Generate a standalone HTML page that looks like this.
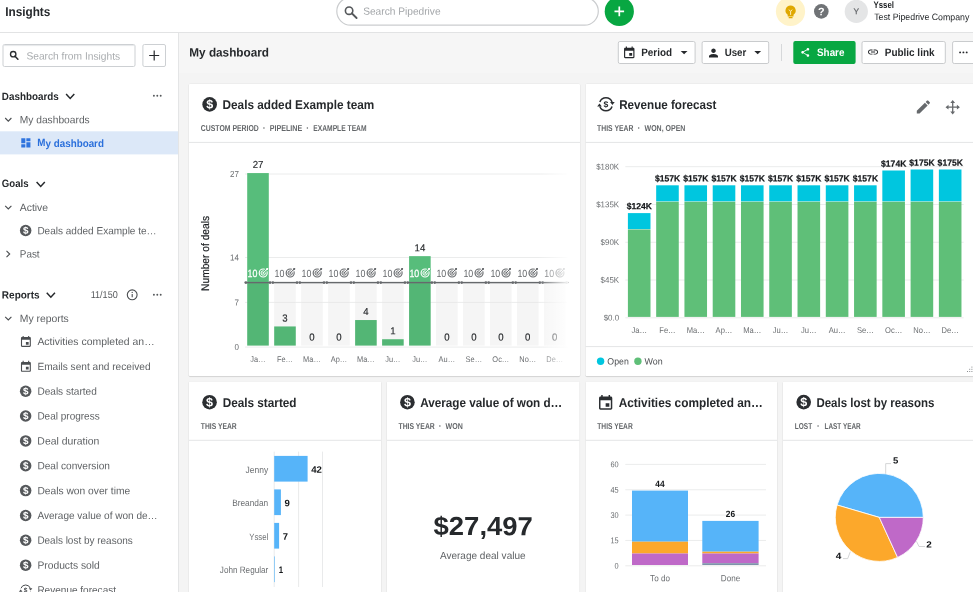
<!DOCTYPE html><html lang="en"><head><meta charset="utf-8"><title>Insights - My dashboard</title><style>html,body{margin:0;padding:0}body{width:973px;height:592px;overflow:hidden;position:relative;background:#f4f4f4;font-family:"Liberation Sans", sans-serif;color:#26292c}svg text{font-family:"Liberation Sans", sans-serif;white-space:pre}#app{position:absolute;left:0;top:0;width:973px;height:592px;overflow:hidden;background:#f4f4f4}svg{will-change:transform}</style></head><body><div id="app"><header class="topbar" style="position:absolute;left:0;top:0;width:973px;height:32px;background:#fff;border-bottom:1px solid #e2e3e4"><svg width="973" height="32" viewBox="0 0 973 32" style="position:absolute;left:0;top:0;overflow:hidden;"><text x="5.16" y="16.00" font-size="12.75" font-weight="700" fill="#26292c" textLength="45.18" lengthAdjust="spacingAndGlyphs" transform="rotate(0.03 5.8 16.0)" >Insights</text><rect x="336.8" y="-2.5" width="261.5" height="27.6" rx="13.8" fill="#fff" stroke="#cbcdcf" stroke-width="1.2"/><circle cx="349.10" cy="10.70" r="3.7" fill="none" stroke="#55585b" stroke-width="1.6"/><path d="M351.75 13.28 L356.60 18.00" stroke="#55585b" stroke-width="1.84" stroke-linecap="round"/><text x="363.18" y="14.80" font-size="10.43" font-weight="400" fill="#a3a6a9" textLength="77.44" lengthAdjust="spacingAndGlyphs" transform="rotate(0.03 363.7 14.8)" >Search Pipedrive</text><circle cx="619.3" cy="11.4" r="14.6" fill="#08a742"/><path d="M614.5 11.4h9.6M619.3 6.6v9.6" stroke="#fff" stroke-width="1.7"/><circle cx="790.5" cy="11.4" r="14.6" fill="#fff3c9"/><path d="M790.6 5.4a5.1 5.1 0 0 1 2.9 9.3v1.9h-5.8v-1.9a5.1 5.1 0 0 1 2.9-9.3z" fill="#dfa800"/><rect x="788.6" y="17.1" width="4" height="1.2" rx="0.5" fill="#dfa800"/><path d="M789.0 9.6l1.6 1.9l1.6-1.9M790.6 11.5v3.4" stroke="#fff3c9" stroke-width="0.9" fill="none"/><circle cx="821.3" cy="11.4" r="7.3" fill="#707376"/><text x="821.3" y="15.3" font-size="10.8" font-weight="700" fill="#fff" text-anchor="middle" transform="rotate(0.03 821 15)">?</text><circle cx="856.3" cy="11.4" r="11.6" fill="#e4e5e6"/><text transform="translate(856.20,14.30) rotate(0.03) scale(1.0,1)" font-size="8.41" font-weight="400" fill="#606366" text-anchor="middle" stroke="#606366" stroke-width="0.2">Y</text><text x="873.53" y="8.40" font-size="9.42" font-weight="700" fill="#1d2023" textLength="20.44" lengthAdjust="spacingAndGlyphs" transform="rotate(0.03 874.0 8.4)" >Yssel</text><text x="874.14" y="20.10" font-size="9.28" font-weight="400" fill="#1d2023" textLength="95.23" lengthAdjust="spacingAndGlyphs" transform="rotate(0.03 874.6 20.1)" >Test Pipedrive Company</text></svg></header>
<aside class="sidebar" style="position:absolute;left:0;top:33px;width:178px;height:559px;background:#fff;border-right:1px solid #e4e5e6"><svg width="178" height="559" viewBox="0 33 178 559" style="position:absolute;left:0;top:0;overflow:hidden;"><rect x="3" y="44.5" width="132" height="22" rx="1.5" fill="#fff" stroke="#cdd0d3" stroke-width="1"/><path d="M3.5 45.6h131" stroke="#e6e8ea" stroke-width="1"/><circle cx="13.20" cy="54.20" r="2.7" fill="none" stroke="#2b2e31" stroke-width="1.35"/><path d="M15.05 56.17 L17.90 59.20" stroke="#2b2e31" stroke-width="1.55" stroke-linecap="round"/><text x="26.38" y="59.60" font-size="10.43" font-weight="400" fill="#a9acaf" textLength="93.74" lengthAdjust="spacingAndGlyphs" transform="rotate(0.03 26.9 59.6)" >Search from Insights</text><rect x="142.9" y="44.5" width="22.6" height="22" rx="1.5" fill="#fff" stroke="#cdd0d3" stroke-width="1"/><path d="M149.2 55.5h10M154.2 50.5v10" stroke="#26292c" stroke-width="1.2"/><text x="1.87" y="99.90" font-size="10.58" font-weight="700" fill="#26292c" textLength="56.86" lengthAdjust="spacingAndGlyphs" transform="rotate(0.03 2.4 99.9)" >Dashboards</text><path d="M66.10 94.10 L70.20 98.50 L74.30 94.10" fill="none" stroke="#26292c" stroke-width="1.5"/><circle cx="153.90" cy="95.80" r="0.95" fill="#55585b"/><circle cx="157.30" cy="95.80" r="0.95" fill="#55585b"/><circle cx="160.70" cy="95.80" r="0.95" fill="#55585b"/><path d="M5.20 118.00 L8.30 121.20 L11.40 118.00" fill="none" stroke="#4a4d50" stroke-width="1.1"/><text x="19.78" y="123.20" font-size="10.43" font-weight="400" fill="#5f6265" textLength="69.94" lengthAdjust="spacingAndGlyphs" transform="rotate(0.03 20.3 123.2)" >My dashboards</text><rect x="0" y="131.3" width="178" height="23.1" fill="#dce8f8"/><path transform="translate(19.75,136.75) scale(0.5083)" fill="#2f74de" d="M3 13h8V3H3v10zm0 8h8v-6H3v6zm10 0h8V11h-8v10zm0-18v6h8V3h-8z"/><text x="37.37" y="146.50" font-size="10.58" font-weight="700" fill="#2a6fdb" textLength="66.56" lengthAdjust="spacingAndGlyphs" transform="rotate(0.03 37.9 146.5)" >My dashboard</text><text x="1.87" y="187.40" font-size="10.58" font-weight="700" fill="#26292c" textLength="26.66" lengthAdjust="spacingAndGlyphs" transform="rotate(0.03 2.4 187.4)" >Goals</text><path d="M36.60 182.00 L40.70 186.40 L44.80 182.00" fill="none" stroke="#26292c" stroke-width="1.5"/><path d="M5.20 205.80 L8.30 209.00 L11.40 205.80" fill="none" stroke="#4a4d50" stroke-width="1.1"/><text x="19.78" y="210.90" font-size="10.43" font-weight="400" fill="#5f6265" textLength="28.34" lengthAdjust="spacingAndGlyphs" transform="rotate(0.03 20.3 210.9)" >Active</text><circle cx="25.65" cy="230.50" r="5.75" fill="#55585b"/><text x="25.65" y="233.81" font-size="9.89" font-weight="700" fill="#fff" text-anchor="middle" transform="rotate(0.03 25.6 230.5)">$</text><text x="37.38" y="234.20" font-size="10.43" font-weight="400" fill="#5f6265" textLength="119.24" lengthAdjust="spacingAndGlyphs" transform="rotate(0.03 37.9 234.2)" >Deals added Example te…</text><path d="M6.50 250.90 L9.70 254.00 L6.50 257.10" fill="none" stroke="#4a4d50" stroke-width="1.1"/><text x="19.78" y="257.50" font-size="10.43" font-weight="400" fill="#5f6265" textLength="19.84" lengthAdjust="spacingAndGlyphs" transform="rotate(0.03 20.3 257.5)" >Past</text><text x="1.87" y="298.50" font-size="10.58" font-weight="700" fill="#26292c" textLength="37.76" lengthAdjust="spacingAndGlyphs" transform="rotate(0.03 2.4 298.5)" >Reports</text><path d="M46.75 292.80 L50.85 297.20 L54.95 292.80" fill="none" stroke="#26292c" stroke-width="1.5"/><text x="90.70" y="298.40" font-size="10.00" font-weight="400" fill="#55585b" textLength="27.00" lengthAdjust="spacingAndGlyphs" transform="rotate(0.03 91.2 298.4)" >11/150</text><circle cx="132.2" cy="294.8" r="4.9" fill="none" stroke="#4a4d50" stroke-width="1.1"/><path d="M132.2 294.0v3.2" stroke="#4a4d50" stroke-width="1.1"/><circle cx="132.2" cy="292.4" r="0.65" fill="#4a4d50"/><circle cx="153.90" cy="294.80" r="0.95" fill="#55585b"/><circle cx="157.30" cy="294.80" r="0.95" fill="#55585b"/><circle cx="160.70" cy="294.80" r="0.95" fill="#55585b"/><path d="M5.20 316.80 L8.30 320.00 L11.40 316.80" fill="none" stroke="#4a4d50" stroke-width="1.1"/><text x="19.78" y="321.90" font-size="10.43" font-weight="400" fill="#5f6265" textLength="49.04" lengthAdjust="spacingAndGlyphs" transform="rotate(0.03 20.3 321.9)" >My reports</text><path transform="translate(19.30,335.40) scale(0.5500)" fill="#4a4d50" d="M17 12h-5v5h5v-5zM16 1v2H8V1H6v2H5c-1.11 0-1.99.9-1.99 2L3 19c0 1.1.89 2 2 2h14c1.1 0 2-.9 2-2V5c0-1.1-.9-2-2-2h-1V1h-2zm3 18H5V8h14v11z"/><text x="37.38" y="345.05" font-size="10.43" font-weight="400" fill="#5f6265" textLength="117.24" lengthAdjust="spacingAndGlyphs" transform="rotate(0.03 37.9 345.1)" >Activities completed an…</text><path transform="translate(19.30,360.25) scale(0.5500)" fill="#4a4d50" d="M17 12h-5v5h5v-5zM16 1v2H8V1H6v2H5c-1.11 0-1.99.9-1.99 2L3 19c0 1.1.89 2 2 2h14c1.1 0 2-.9 2-2V5c0-1.1-.9-2-2-2h-1V1h-2zm3 18H5V8h14v11z"/><text x="37.38" y="369.90" font-size="10.43" font-weight="400" fill="#5f6265" textLength="113.14" lengthAdjust="spacingAndGlyphs" transform="rotate(0.03 37.9 369.9)" >Emails sent and received</text><circle cx="25.65" cy="391.20" r="5.75" fill="#55585b"/><text x="25.65" y="394.51" font-size="9.89" font-weight="700" fill="#fff" text-anchor="middle" transform="rotate(0.03 25.6 391.2)">$</text><text x="37.38" y="394.75" font-size="10.43" font-weight="400" fill="#5f6265" textLength="59.44" lengthAdjust="spacingAndGlyphs" transform="rotate(0.03 37.9 394.8)" >Deals started</text><circle cx="25.65" cy="416.05" r="5.75" fill="#55585b"/><text x="25.65" y="419.36" font-size="9.89" font-weight="700" fill="#fff" text-anchor="middle" transform="rotate(0.03 25.6 416.1)">$</text><text x="37.38" y="419.60" font-size="10.43" font-weight="400" fill="#5f6265" textLength="62.34" lengthAdjust="spacingAndGlyphs" transform="rotate(0.03 37.9 419.6)" >Deal progress</text><circle cx="25.65" cy="440.90" r="5.75" fill="#55585b"/><text x="25.65" y="444.21" font-size="9.89" font-weight="700" fill="#fff" text-anchor="middle" transform="rotate(0.03 25.6 440.9)">$</text><text x="37.38" y="444.45" font-size="10.43" font-weight="400" fill="#5f6265" textLength="61.94" lengthAdjust="spacingAndGlyphs" transform="rotate(0.03 37.9 444.4)" >Deal duration</text><circle cx="25.65" cy="465.75" r="5.75" fill="#55585b"/><text x="25.65" y="469.06" font-size="9.89" font-weight="700" fill="#fff" text-anchor="middle" transform="rotate(0.03 25.6 465.8)">$</text><text x="37.38" y="469.30" font-size="10.43" font-weight="400" fill="#5f6265" textLength="72.54" lengthAdjust="spacingAndGlyphs" transform="rotate(0.03 37.9 469.3)" >Deal conversion</text><circle cx="25.65" cy="490.60" r="5.75" fill="#55585b"/><text x="25.65" y="493.91" font-size="9.89" font-weight="700" fill="#fff" text-anchor="middle" transform="rotate(0.03 25.6 490.6)">$</text><text x="37.38" y="494.15" font-size="10.43" font-weight="400" fill="#5f6265" textLength="92.84" lengthAdjust="spacingAndGlyphs" transform="rotate(0.03 37.9 494.2)" >Deals won over time</text><circle cx="25.65" cy="515.45" r="5.75" fill="#55585b"/><text x="25.65" y="518.76" font-size="9.89" font-weight="700" fill="#fff" text-anchor="middle" transform="rotate(0.03 25.6 515.5)">$</text><text x="37.38" y="519.00" font-size="10.43" font-weight="400" fill="#5f6265" textLength="120.24" lengthAdjust="spacingAndGlyphs" transform="rotate(0.03 37.9 519.0)" >Average value of won de…</text><circle cx="25.65" cy="540.30" r="5.75" fill="#55585b"/><text x="25.65" y="543.61" font-size="9.89" font-weight="700" fill="#fff" text-anchor="middle" transform="rotate(0.03 25.6 540.3)">$</text><text x="37.38" y="543.85" font-size="10.43" font-weight="400" fill="#5f6265" textLength="95.34" lengthAdjust="spacingAndGlyphs" transform="rotate(0.03 37.9 543.8)" >Deals lost by reasons</text><circle cx="25.65" cy="565.15" r="5.75" fill="#55585b"/><text x="25.65" y="568.46" font-size="9.89" font-weight="700" fill="#fff" text-anchor="middle" transform="rotate(0.03 25.6 565.1)">$</text><text x="37.38" y="568.70" font-size="10.43" font-weight="400" fill="#5f6265" textLength="62.44" lengthAdjust="spacingAndGlyphs" transform="rotate(0.03 37.9 568.7)" >Products sold</text><path d="M20.95 588.29 A5.00 5.00 0 0 1 30.35 588.29" fill="none" stroke="#4a4d50" stroke-width="1.0"/><path d="M30.35 591.71 A5.00 5.00 0 0 1 20.95 591.71" fill="none" stroke="#4a4d50" stroke-width="1.0"/><path d="M28.80 588.22 L32.40 588.22 L30.60 590.56z" fill="#4a4d50"/><path d="M18.90 591.78 L22.50 591.78 L20.70 589.44z" fill="#4a4d50"/><text x="25.65" y="592.21" font-size="6.50" font-weight="700" fill="#4a4d50" text-anchor="middle" transform="rotate(0.03 25.6 590.0)">$</text><text x="37.38" y="593.55" font-size="10.43" font-weight="400" fill="#5f6265" textLength="78.64" lengthAdjust="spacingAndGlyphs" transform="rotate(0.03 37.9 593.5)" >Revenue forecast</text></svg></aside>
<div class="dash-header" style="position:absolute;left:179px;top:33px;width:794px;height:40px;background:#f6f6f6"><svg width="794" height="40" viewBox="179 33 794 40" style="position:absolute;left:0;top:0;overflow:hidden;"><text x="189.29" y="56.40" font-size="12.17" font-weight="700" fill="#26292c" textLength="79.72" lengthAdjust="spacingAndGlyphs" transform="rotate(0.03 189.9 56.4)" >My dashboard</text><rect x="618.30" y="41.5" width="76.80" height="22" rx="1.6" fill="#fff" stroke="#c9cbcd" stroke-width="1"/><path transform="translate(622.30,46.00) scale(0.5792)" fill="#26292c" d="M17 12h-5v5h5v-5zM16 1v2H8V1H6v2H5c-1.11 0-1.99.9-1.99 2L3 19c0 1.1.89 2 2 2h14c1.1 0 2-.9 2-2V5c0-1.1-.9-2-2-2h-1V1h-2zm3 18H5V8h14v11z"/><text x="641.26" y="56.00" font-size="10.72" font-weight="700" fill="#26292c" textLength="30.77" lengthAdjust="spacingAndGlyphs" transform="rotate(0.03 641.8 56.0)" >Period</text><path d="M680.70 51.05 h6.80 L684.10 54.35z" fill="#26292c"/><rect x="702.10" y="41.5" width="66.60" height="22" rx="1.6" fill="#fff" stroke="#c9cbcd" stroke-width="1"/><path transform="translate(706.75,46.20) scale(0.5625)" fill="#26292c" d="M12 12c2.21 0 4-1.79 4-4s-1.79-4-4-4-4 1.790-4 4 1.790 4 4 4zm0 2c-2.67 0-8 1.34-8 4v2h16v-2c0-2.66-5.33-4-8-4z"/><text x="724.66" y="56.00" font-size="10.72" font-weight="700" fill="#26292c" textLength="21.57" lengthAdjust="spacingAndGlyphs" transform="rotate(0.03 725.2 56.0)" >User</text><path d="M754.30 51.05 h6.80 L757.70 54.35z" fill="#26292c"/><path d="M781.5 44v17" stroke="#d6d8da" stroke-width="1"/><rect x="793.3" y="40.9" width="62.3" height="23" rx="2" fill="#08a742"/><path transform="translate(799.90,47.00) scale(0.4458)" fill="#fff" d="M18 16.08c-.76 0-1.44.3-1.96.77L8.91 12.7c.05-.23.09-.46.09-.7s-.04-.47-.09-.7l7.05-4.11c.54.5 1.25.81 2.04.81 1.66 0 3-1.34 3-3s-1.34-3-3-3-3 1.34-3 3c0 .24.04.47.09.7L8.04 9.81C7.5 9.31 6.79 9 6 9c-1.66 0-3 1.34-3 3s1.340 3 3 3c.79 0 1.5-.31 2.04-.81l7.12 4.160c-.05.21-.08.43-.08.65 0 1.61 1.31 2.920 2.92 2.92 1.61 0 2.920-1.31 2.92-2.92s-1.31-2.92-2.920-2.92z"/><text x="817.06" y="56.00" font-size="10.72" font-weight="700" fill="#fff" textLength="27.37" lengthAdjust="spacingAndGlyphs" transform="rotate(0.03 817.6 56.0)" >Share</text><rect x="862.00" y="41.5" width="83.30" height="22" rx="1.6" fill="#fff" stroke="#c9cbcd" stroke-width="1"/><path transform="translate(867.00,46.05) scale(0.5042)" fill="#26292c" d="M3.9 12c0-1.71 1.39-3.1 3.1-3.1h4V7H7c-2.76 0-5 2.24-5 5s2.24 5 5 5h4v-1.9H7c-1.71 0-3.1-1.39-3.1-3.1zM8 13h8v-2H8v2zm9-6h-4v1.9h4c1.71 0 3.1 1.39 3.1 3.1s-1.39 3.1-3.1 3.1h-4V17h4c2.76 0 5-2.24 5-5s-2.24-5-5-5z"/><text x="884.76" y="56.00" font-size="10.72" font-weight="700" fill="#26292c" textLength="49.77" lengthAdjust="spacingAndGlyphs" transform="rotate(0.03 885.3 56.0)" >Public link</text><rect x="952.60" y="41.5" width="31.90" height="22" rx="1.6" fill="#fff" stroke="#c9cbcd" stroke-width="1"/><circle cx="960.10" cy="52.40" r="0.95" fill="#26292c"/><circle cx="963.40" cy="52.40" r="0.95" fill="#26292c"/><circle cx="966.70" cy="52.40" r="0.95" fill="#26292c"/></svg></div>
<section class="card" style="position:absolute;left:185px;top:81px;width:398px;height:298px;overflow:hidden"><svg width="398" height="298" viewBox="185 81 398 298" style="position:absolute;left:0;top:0;overflow:hidden;"><rect x="188.40" y="83.60" width="392.10" height="293.60" rx="2" fill="#000" fill-opacity="0.055"/><rect x="188.70" y="84.30" width="391.50" height="292.60" rx="1.3" fill="#000" fill-opacity="0.07"/><rect x="188.90" y="84.00" width="391.10" height="292.00" rx="1" fill="#fff"/><circle cx="209.65" cy="104.40" r="7.30" fill="#2b2e31"/><text x="209.65" y="108.61" font-size="12.56" font-weight="700" fill="#fff" text-anchor="middle" transform="rotate(0.03 209.7 104.4)">$</text><text x="222.56" y="108.90" font-size="12.75" font-weight="700" fill="#26292c" textLength="151.68" lengthAdjust="spacingAndGlyphs" transform="rotate(0.03 223.2 108.9)" >Deals added Example team</text><text x="200.87" y="130.80" font-size="8.55" font-weight="700" fill="#64676a" textLength="57.86" lengthAdjust="spacingAndGlyphs" transform="rotate(0.03 201.3 130.8)" >CUSTOM PERIOD</text><circle cx="263.95" cy="128.10" r="0.75" fill="#5f6265"/><text x="269.77" y="130.80" font-size="8.55" font-weight="700" fill="#64676a" textLength="32.36" lengthAdjust="spacingAndGlyphs" transform="rotate(0.03 270.2 130.8)" >PIPELINE</text><circle cx="307.40" cy="128.10" r="0.75" fill="#5f6265"/><text x="313.27" y="130.80" font-size="8.55" font-weight="700" fill="#64676a" textLength="53.26" lengthAdjust="spacingAndGlyphs" transform="rotate(0.03 313.7 130.8)" >EXAMPLE TEAM</text><path d="M188.9 142.4H580.0" stroke="#e4e5e6" stroke-width="1"/><path d="M245 174.0H567.3" stroke="#ebecec" stroke-width="1"/><text transform="translate(238.90,177.00) rotate(0.03) scale(0.92,1)" font-size="8.70" font-weight="400" fill="#6b6e71" text-anchor="end" >27</text><path d="M245 257.5H567.3" stroke="#ebecec" stroke-width="1"/><text transform="translate(238.90,260.50) rotate(0.03) scale(0.92,1)" font-size="8.70" font-weight="400" fill="#6b6e71" text-anchor="end" >14</text><path d="M245 302.4H567.3" stroke="#ebecec" stroke-width="1"/><text transform="translate(238.90,305.40) rotate(0.03) scale(0.92,1)" font-size="8.70" font-weight="400" fill="#6b6e71" text-anchor="end" >7</text><path d="M245 347.1H567.3" stroke="#ebecec" stroke-width="1"/><text transform="translate(238.90,350.10) rotate(0.03) scale(0.92,1)" font-size="8.70" font-weight="400" fill="#6b6e71" text-anchor="end" >0</text><text transform="translate(208.9,253.4) rotate(-90.03) scale(0.93,1)" font-size="11.0" fill="#1a1d20" stroke="#1a1d20" stroke-width="0.2" text-anchor="middle">Number of deals</text><rect x="247.20" y="173.07" width="21.6" height="109.53" fill="#57bd7b"/><rect x="247.20" y="282.60" width="21.6" height="63.00" fill="#53b675"/><path d="M245.60 282.6H270.30" stroke="#66696c" stroke-width="1.45"/><circle cx="245.80" cy="282.6" r="1.4" fill="#66696c"/><circle cx="270.10" cy="282.6" r="1.4" fill="#66696c"/><text x="247.58" y="276.60" font-size="10.43" font-weight="400" fill="#ffffff" textLength="9.84" lengthAdjust="spacingAndGlyphs" transform="rotate(0.03 248.1 276.6)" stroke="#fff" stroke-width="0.25">10</text><circle cx="263.20" cy="273.00" r="4.90" fill="#57bd7b"/><circle cx="263.20" cy="273.00" r="4.00" fill="none" stroke="#ffffff" stroke-width="1.15"/><circle cx="263.20" cy="273.00" r="2.20" fill="none" stroke="#ffffff" stroke-width="1.0"/><circle cx="263.20" cy="273.00" r="0.85" fill="#ffffff"/><path d="M264.10 272.10 L267.92 268.28" stroke="#57bd7b" stroke-width="2.6"/><path d="M263.20 273.00 L267.62 268.58" stroke="#ffffff" stroke-width="1.0"/><path d="M265.68 270.52 L266.42 268.08 L268.12 268.08 L268.12 269.78z" fill="#ffffff"/><text transform="translate(258.00,168.07) rotate(0.03) scale(0.95,1)" font-size="10.14" font-weight="400" fill="#1f2225" text-anchor="middle" stroke="#1f2225" stroke-width="0.15">27</text><text transform="translate(258.00,362.00) rotate(0.03) scale(0.9,1)" font-size="8.26" font-weight="400" fill="#6b6e71" text-anchor="middle" >Ja…</text><rect x="274.18" y="282.60" width="21.6" height="43.83" fill="#f5f5f5"/><rect x="274.18" y="326.43" width="21.6" height="19.17" fill="#53b675"/><path d="M274.18 302.4h21.6" stroke="#e9e9e9" stroke-width="1"/><path d="M272.58 282.6H297.28" stroke="#66696c" stroke-width="1.45"/><circle cx="272.78" cy="282.6" r="1.4" fill="#66696c"/><circle cx="297.08" cy="282.6" r="1.4" fill="#66696c"/><text x="274.56" y="276.60" font-size="10.43" font-weight="400" fill="#66696c" textLength="9.84" lengthAdjust="spacingAndGlyphs" transform="rotate(0.03 275.1 276.6)" >10</text><circle cx="290.18" cy="273.00" r="4.90" fill="#fff"/><circle cx="290.18" cy="273.00" r="4.00" fill="none" stroke="#66696c" stroke-width="1.15"/><circle cx="290.18" cy="273.00" r="2.20" fill="none" stroke="#66696c" stroke-width="1.0"/><circle cx="290.18" cy="273.00" r="0.85" fill="#66696c"/><path d="M291.08 272.10 L294.90 268.28" stroke="#fff" stroke-width="2.6"/><path d="M290.18 273.00 L294.60 268.58" stroke="#66696c" stroke-width="1.0"/><path d="M292.66 270.52 L293.40 268.08 L295.10 268.08 L295.10 269.78z" fill="#66696c"/><text transform="translate(284.98,321.43) rotate(0.03) scale(0.95,1)" font-size="10.14" font-weight="400" fill="#1f2225" text-anchor="middle" stroke="#1f2225" stroke-width="0.15">3</text><text transform="translate(284.98,362.00) rotate(0.03) scale(0.9,1)" font-size="8.26" font-weight="400" fill="#6b6e71" text-anchor="middle" >Fe…</text><rect x="301.16" y="282.60" width="21.6" height="63.00" fill="#f5f5f5"/><path d="M301.16 302.4h21.6" stroke="#e9e9e9" stroke-width="1"/><path d="M299.56 282.6H324.26" stroke="#66696c" stroke-width="1.45"/><circle cx="299.76" cy="282.6" r="1.4" fill="#66696c"/><circle cx="324.06" cy="282.6" r="1.4" fill="#66696c"/><text x="301.54" y="276.60" font-size="10.43" font-weight="400" fill="#66696c" textLength="9.84" lengthAdjust="spacingAndGlyphs" transform="rotate(0.03 302.1 276.6)" >10</text><circle cx="317.16" cy="273.00" r="4.90" fill="#fff"/><circle cx="317.16" cy="273.00" r="4.00" fill="none" stroke="#66696c" stroke-width="1.15"/><circle cx="317.16" cy="273.00" r="2.20" fill="none" stroke="#66696c" stroke-width="1.0"/><circle cx="317.16" cy="273.00" r="0.85" fill="#66696c"/><path d="M318.06 272.10 L321.88 268.28" stroke="#fff" stroke-width="2.6"/><path d="M317.16 273.00 L321.58 268.58" stroke="#66696c" stroke-width="1.0"/><path d="M319.64 270.52 L320.38 268.08 L322.08 268.08 L322.08 269.78z" fill="#66696c"/><text transform="translate(311.96,340.60) rotate(0.03) scale(0.95,1)" font-size="10.14" font-weight="400" fill="#1f2225" text-anchor="middle" stroke="#1f2225" stroke-width="0.15">0</text><text transform="translate(311.96,362.00) rotate(0.03) scale(0.9,1)" font-size="8.26" font-weight="400" fill="#6b6e71" text-anchor="middle" >Ma…</text><rect x="328.14" y="282.60" width="21.6" height="63.00" fill="#f5f5f5"/><path d="M328.14 302.4h21.6" stroke="#e9e9e9" stroke-width="1"/><path d="M326.54 282.6H351.24" stroke="#66696c" stroke-width="1.45"/><circle cx="326.74" cy="282.6" r="1.4" fill="#66696c"/><circle cx="351.04" cy="282.6" r="1.4" fill="#66696c"/><text x="328.52" y="276.60" font-size="10.43" font-weight="400" fill="#66696c" textLength="9.84" lengthAdjust="spacingAndGlyphs" transform="rotate(0.03 329.0 276.6)" >10</text><circle cx="344.14" cy="273.00" r="4.90" fill="#fff"/><circle cx="344.14" cy="273.00" r="4.00" fill="none" stroke="#66696c" stroke-width="1.15"/><circle cx="344.14" cy="273.00" r="2.20" fill="none" stroke="#66696c" stroke-width="1.0"/><circle cx="344.14" cy="273.00" r="0.85" fill="#66696c"/><path d="M345.04 272.10 L348.86 268.28" stroke="#fff" stroke-width="2.6"/><path d="M344.14 273.00 L348.56 268.58" stroke="#66696c" stroke-width="1.0"/><path d="M346.62 270.52 L347.36 268.08 L349.06 268.08 L349.06 269.78z" fill="#66696c"/><text transform="translate(338.94,340.60) rotate(0.03) scale(0.95,1)" font-size="10.14" font-weight="400" fill="#1f2225" text-anchor="middle" stroke="#1f2225" stroke-width="0.15">0</text><text transform="translate(338.94,362.00) rotate(0.03) scale(0.9,1)" font-size="8.26" font-weight="400" fill="#6b6e71" text-anchor="middle" >Ap…</text><rect x="355.12" y="282.60" width="21.6" height="37.44" fill="#f5f5f5"/><rect x="355.12" y="320.04" width="21.6" height="25.56" fill="#53b675"/><path d="M355.12 302.4h21.6" stroke="#e9e9e9" stroke-width="1"/><path d="M353.52 282.6H378.22" stroke="#66696c" stroke-width="1.45"/><circle cx="353.72" cy="282.6" r="1.4" fill="#66696c"/><circle cx="378.02" cy="282.6" r="1.4" fill="#66696c"/><text x="355.50" y="276.60" font-size="10.43" font-weight="400" fill="#66696c" textLength="9.84" lengthAdjust="spacingAndGlyphs" transform="rotate(0.03 356.0 276.6)" >10</text><circle cx="371.12" cy="273.00" r="4.90" fill="#fff"/><circle cx="371.12" cy="273.00" r="4.00" fill="none" stroke="#66696c" stroke-width="1.15"/><circle cx="371.12" cy="273.00" r="2.20" fill="none" stroke="#66696c" stroke-width="1.0"/><circle cx="371.12" cy="273.00" r="0.85" fill="#66696c"/><path d="M372.02 272.10 L375.84 268.28" stroke="#fff" stroke-width="2.6"/><path d="M371.12 273.00 L375.54 268.58" stroke="#66696c" stroke-width="1.0"/><path d="M373.60 270.52 L374.34 268.08 L376.04 268.08 L376.04 269.78z" fill="#66696c"/><text transform="translate(365.92,315.04) rotate(0.03) scale(0.95,1)" font-size="10.14" font-weight="400" fill="#1f2225" text-anchor="middle" stroke="#1f2225" stroke-width="0.15">4</text><text transform="translate(365.92,362.00) rotate(0.03) scale(0.9,1)" font-size="8.26" font-weight="400" fill="#6b6e71" text-anchor="middle" >Ma…</text><rect x="382.10" y="282.60" width="21.6" height="56.61" fill="#f5f5f5"/><rect x="382.10" y="339.21" width="21.6" height="6.39" fill="#53b675"/><path d="M382.10 302.4h21.6" stroke="#e9e9e9" stroke-width="1"/><path d="M380.50 282.6H405.20" stroke="#66696c" stroke-width="1.45"/><circle cx="380.70" cy="282.6" r="1.4" fill="#66696c"/><circle cx="405.00" cy="282.6" r="1.4" fill="#66696c"/><text x="382.48" y="276.60" font-size="10.43" font-weight="400" fill="#66696c" textLength="9.84" lengthAdjust="spacingAndGlyphs" transform="rotate(0.03 383.0 276.6)" >10</text><circle cx="398.10" cy="273.00" r="4.90" fill="#fff"/><circle cx="398.10" cy="273.00" r="4.00" fill="none" stroke="#66696c" stroke-width="1.15"/><circle cx="398.10" cy="273.00" r="2.20" fill="none" stroke="#66696c" stroke-width="1.0"/><circle cx="398.10" cy="273.00" r="0.85" fill="#66696c"/><path d="M399.00 272.10 L402.82 268.28" stroke="#fff" stroke-width="2.6"/><path d="M398.10 273.00 L402.52 268.58" stroke="#66696c" stroke-width="1.0"/><path d="M400.58 270.52 L401.32 268.08 L403.02 268.08 L403.02 269.78z" fill="#66696c"/><text transform="translate(392.90,334.21) rotate(0.03) scale(0.95,1)" font-size="10.14" font-weight="400" fill="#1f2225" text-anchor="middle" stroke="#1f2225" stroke-width="0.15">1</text><text transform="translate(392.90,362.00) rotate(0.03) scale(0.9,1)" font-size="8.26" font-weight="400" fill="#6b6e71" text-anchor="middle" >Ju…</text><rect x="409.08" y="256.14" width="21.6" height="26.46" fill="#57bd7b"/><rect x="409.08" y="282.60" width="21.6" height="63.00" fill="#53b675"/><path d="M407.48 282.6H432.18" stroke="#66696c" stroke-width="1.45"/><circle cx="407.68" cy="282.6" r="1.4" fill="#66696c"/><circle cx="431.98" cy="282.6" r="1.4" fill="#66696c"/><text x="409.46" y="276.60" font-size="10.43" font-weight="400" fill="#ffffff" textLength="9.84" lengthAdjust="spacingAndGlyphs" transform="rotate(0.03 410.0 276.6)" stroke="#fff" stroke-width="0.25">10</text><circle cx="425.08" cy="273.00" r="4.90" fill="#57bd7b"/><circle cx="425.08" cy="273.00" r="4.00" fill="none" stroke="#ffffff" stroke-width="1.15"/><circle cx="425.08" cy="273.00" r="2.20" fill="none" stroke="#ffffff" stroke-width="1.0"/><circle cx="425.08" cy="273.00" r="0.85" fill="#ffffff"/><path d="M425.98 272.10 L429.80 268.28" stroke="#57bd7b" stroke-width="2.6"/><path d="M425.08 273.00 L429.50 268.58" stroke="#ffffff" stroke-width="1.0"/><path d="M427.56 270.52 L428.30 268.08 L430.00 268.08 L430.00 269.78z" fill="#ffffff"/><text transform="translate(419.88,251.14) rotate(0.03) scale(0.95,1)" font-size="10.14" font-weight="400" fill="#1f2225" text-anchor="middle" stroke="#1f2225" stroke-width="0.15">14</text><text transform="translate(419.88,362.00) rotate(0.03) scale(0.9,1)" font-size="8.26" font-weight="400" fill="#6b6e71" text-anchor="middle" >Ju…</text><rect x="436.06" y="282.60" width="21.6" height="63.00" fill="#f5f5f5"/><path d="M436.06 302.4h21.6" stroke="#e9e9e9" stroke-width="1"/><path d="M434.46 282.6H459.16" stroke="#66696c" stroke-width="1.45"/><circle cx="434.66" cy="282.6" r="1.4" fill="#66696c"/><circle cx="458.96" cy="282.6" r="1.4" fill="#66696c"/><text x="436.44" y="276.60" font-size="10.43" font-weight="400" fill="#66696c" textLength="9.84" lengthAdjust="spacingAndGlyphs" transform="rotate(0.03 437.0 276.6)" >10</text><circle cx="452.06" cy="273.00" r="4.90" fill="#fff"/><circle cx="452.06" cy="273.00" r="4.00" fill="none" stroke="#66696c" stroke-width="1.15"/><circle cx="452.06" cy="273.00" r="2.20" fill="none" stroke="#66696c" stroke-width="1.0"/><circle cx="452.06" cy="273.00" r="0.85" fill="#66696c"/><path d="M452.96 272.10 L456.78 268.28" stroke="#fff" stroke-width="2.6"/><path d="M452.06 273.00 L456.48 268.58" stroke="#66696c" stroke-width="1.0"/><path d="M454.54 270.52 L455.28 268.08 L456.98 268.08 L456.98 269.78z" fill="#66696c"/><text transform="translate(446.86,340.60) rotate(0.03) scale(0.95,1)" font-size="10.14" font-weight="400" fill="#1f2225" text-anchor="middle" stroke="#1f2225" stroke-width="0.15">0</text><text transform="translate(446.86,362.00) rotate(0.03) scale(0.9,1)" font-size="8.26" font-weight="400" fill="#6b6e71" text-anchor="middle" >Au…</text><rect x="463.04" y="282.60" width="21.6" height="63.00" fill="#f5f5f5"/><path d="M463.04 302.4h21.6" stroke="#e9e9e9" stroke-width="1"/><path d="M461.44 282.6H486.14" stroke="#66696c" stroke-width="1.45"/><circle cx="461.64" cy="282.6" r="1.4" fill="#66696c"/><circle cx="485.94" cy="282.6" r="1.4" fill="#66696c"/><text x="463.42" y="276.60" font-size="10.43" font-weight="400" fill="#66696c" textLength="9.84" lengthAdjust="spacingAndGlyphs" transform="rotate(0.03 463.9 276.6)" >10</text><circle cx="479.04" cy="273.00" r="4.90" fill="#fff"/><circle cx="479.04" cy="273.00" r="4.00" fill="none" stroke="#66696c" stroke-width="1.15"/><circle cx="479.04" cy="273.00" r="2.20" fill="none" stroke="#66696c" stroke-width="1.0"/><circle cx="479.04" cy="273.00" r="0.85" fill="#66696c"/><path d="M479.94 272.10 L483.76 268.28" stroke="#fff" stroke-width="2.6"/><path d="M479.04 273.00 L483.46 268.58" stroke="#66696c" stroke-width="1.0"/><path d="M481.52 270.52 L482.26 268.08 L483.96 268.08 L483.96 269.78z" fill="#66696c"/><text transform="translate(473.84,340.60) rotate(0.03) scale(0.95,1)" font-size="10.14" font-weight="400" fill="#1f2225" text-anchor="middle" stroke="#1f2225" stroke-width="0.15">0</text><text transform="translate(473.84,362.00) rotate(0.03) scale(0.9,1)" font-size="8.26" font-weight="400" fill="#6b6e71" text-anchor="middle" >Se…</text><rect x="490.02" y="282.60" width="21.6" height="63.00" fill="#f5f5f5"/><path d="M490.02 302.4h21.6" stroke="#e9e9e9" stroke-width="1"/><path d="M488.42 282.6H513.12" stroke="#66696c" stroke-width="1.45"/><circle cx="488.62" cy="282.6" r="1.4" fill="#66696c"/><circle cx="512.92" cy="282.6" r="1.4" fill="#66696c"/><text x="490.40" y="276.60" font-size="10.43" font-weight="400" fill="#66696c" textLength="9.84" lengthAdjust="spacingAndGlyphs" transform="rotate(0.03 490.9 276.6)" >10</text><circle cx="506.02" cy="273.00" r="4.90" fill="#fff"/><circle cx="506.02" cy="273.00" r="4.00" fill="none" stroke="#66696c" stroke-width="1.15"/><circle cx="506.02" cy="273.00" r="2.20" fill="none" stroke="#66696c" stroke-width="1.0"/><circle cx="506.02" cy="273.00" r="0.85" fill="#66696c"/><path d="M506.92 272.10 L510.74 268.28" stroke="#fff" stroke-width="2.6"/><path d="M506.02 273.00 L510.44 268.58" stroke="#66696c" stroke-width="1.0"/><path d="M508.50 270.52 L509.24 268.08 L510.94 268.08 L510.94 269.78z" fill="#66696c"/><text transform="translate(500.82,340.60) rotate(0.03) scale(0.95,1)" font-size="10.14" font-weight="400" fill="#1f2225" text-anchor="middle" stroke="#1f2225" stroke-width="0.15">0</text><text transform="translate(500.82,362.00) rotate(0.03) scale(0.9,1)" font-size="8.26" font-weight="400" fill="#6b6e71" text-anchor="middle" >Oc…</text><rect x="517.00" y="282.60" width="21.6" height="63.00" fill="#f5f5f5"/><path d="M517.00 302.4h21.6" stroke="#e9e9e9" stroke-width="1"/><path d="M515.40 282.6H540.10" stroke="#66696c" stroke-width="1.45"/><circle cx="515.60" cy="282.6" r="1.4" fill="#66696c"/><circle cx="539.90" cy="282.6" r="1.4" fill="#66696c"/><text x="517.38" y="276.60" font-size="10.43" font-weight="400" fill="#66696c" textLength="9.84" lengthAdjust="spacingAndGlyphs" transform="rotate(0.03 517.9 276.6)" >10</text><circle cx="533.00" cy="273.00" r="4.90" fill="#fff"/><circle cx="533.00" cy="273.00" r="4.00" fill="none" stroke="#66696c" stroke-width="1.15"/><circle cx="533.00" cy="273.00" r="2.20" fill="none" stroke="#66696c" stroke-width="1.0"/><circle cx="533.00" cy="273.00" r="0.85" fill="#66696c"/><path d="M533.90 272.10 L537.72 268.28" stroke="#fff" stroke-width="2.6"/><path d="M533.00 273.00 L537.42 268.58" stroke="#66696c" stroke-width="1.0"/><path d="M535.48 270.52 L536.22 268.08 L537.92 268.08 L537.92 269.78z" fill="#66696c"/><text transform="translate(527.80,340.60) rotate(0.03) scale(0.95,1)" font-size="10.14" font-weight="400" fill="#1f2225" text-anchor="middle" stroke="#1f2225" stroke-width="0.15">0</text><text transform="translate(527.80,362.00) rotate(0.03) scale(0.9,1)" font-size="8.26" font-weight="400" fill="#6b6e71" text-anchor="middle" >No…</text><rect x="543.98" y="282.60" width="21.6" height="63.00" fill="#f5f5f5"/><path d="M543.98 302.4h21.6" stroke="#e9e9e9" stroke-width="1"/><path d="M542.38 282.6H567.08" stroke="#66696c" stroke-width="1.45"/><circle cx="542.58" cy="282.6" r="1.4" fill="#66696c"/><circle cx="566.88" cy="282.6" r="1.4" fill="#66696c"/><text x="544.36" y="276.60" font-size="10.43" font-weight="400" fill="#66696c" textLength="9.84" lengthAdjust="spacingAndGlyphs" transform="rotate(0.03 544.9 276.6)" >10</text><circle cx="559.98" cy="273.00" r="4.90" fill="#fff"/><circle cx="559.98" cy="273.00" r="4.00" fill="none" stroke="#66696c" stroke-width="1.15"/><circle cx="559.98" cy="273.00" r="2.20" fill="none" stroke="#66696c" stroke-width="1.0"/><circle cx="559.98" cy="273.00" r="0.85" fill="#66696c"/><path d="M560.88 272.10 L564.70 268.28" stroke="#fff" stroke-width="2.6"/><path d="M559.98 273.00 L564.40 268.58" stroke="#66696c" stroke-width="1.0"/><path d="M562.46 270.52 L563.20 268.08 L564.90 268.08 L564.90 269.78z" fill="#66696c"/><text transform="translate(554.78,340.60) rotate(0.03) scale(0.95,1)" font-size="10.14" font-weight="400" fill="#1f2225" text-anchor="middle" stroke="#1f2225" stroke-width="0.15">0</text><text transform="translate(554.78,362.00) rotate(0.03) scale(0.9,1)" font-size="8.26" font-weight="400" fill="#6b6e71" text-anchor="middle" >De…</text><defs><linearGradient id="fade1" x1="0" x2="1" y1="0" y2="0"><stop offset="0" stop-color="#fff" stop-opacity="0"/><stop offset="1" stop-color="#fff" stop-opacity="0.92"/></linearGradient></defs><rect x="538" y="150" width="30" height="220" fill="url(#fade1)"/></svg></section>
<section class="card" style="position:absolute;left:582px;top:81px;width:391px;height:298px;overflow:hidden"><svg width="391" height="298" viewBox="582 81 391 298" style="position:absolute;left:0;top:0;overflow:hidden;"><rect x="585.10" y="83.60" width="395.40" height="293.60" rx="2" fill="#000" fill-opacity="0.055"/><rect x="585.40" y="84.30" width="394.80" height="292.60" rx="1.3" fill="#000" fill-opacity="0.07"/><rect x="585.60" y="84.00" width="394.40" height="292.00" rx="1" fill="#fff"/><path d="M599.84 102.08 A6.50 6.50 0 0 1 612.06 102.08" fill="none" stroke="#2b2e31" stroke-width="1.55"/><path d="M612.06 106.52 A6.50 6.50 0 0 1 599.84 106.52" fill="none" stroke="#2b2e31" stroke-width="1.55"/><path d="M610.05 101.99 L614.73 101.99 L612.39 105.03z" fill="#2b2e31"/><path d="M597.17 106.61 L601.85 106.61 L599.51 103.57z" fill="#2b2e31"/><text x="605.95" y="107.22" font-size="8.60" font-weight="700" fill="#2b2e31" text-anchor="middle" transform="rotate(0.03 606.0 104.3)">$</text><text x="619.16" y="108.90" font-size="12.75" font-weight="700" fill="#26292c" textLength="97.18" lengthAdjust="spacingAndGlyphs" transform="rotate(0.03 619.8 108.9)" >Revenue forecast</text><text x="597.07" y="130.80" font-size="8.55" font-weight="700" fill="#64676a" textLength="36.36" lengthAdjust="spacingAndGlyphs" transform="rotate(0.03 597.5 130.8)" >THIS YEAR</text><circle cx="638.70" cy="128.10" r="0.75" fill="#5f6265"/><text x="644.57" y="130.80" font-size="8.55" font-weight="700" fill="#64676a" textLength="40.86" lengthAdjust="spacingAndGlyphs" transform="rotate(0.03 645.0 130.8)" >WON, OPEN</text><path transform="translate(914.60,98.20) scale(0.7333)" fill="#66696c" d="M3 17.25V21h3.75L17.81 9.94l-3.75-3.75L3 17.25zM20.71 7.04c.39-.39.39-1.02 0-1.41l-2.34-2.34c-.39-.39-1.02-.39-1.41 0l-1.83 1.83 3.75 3.75 1.83-1.83z"/><path d="M947.00 107.2H958.40M952.7 101.50V112.90" stroke="#66696c" stroke-width="1.3"/><path d="M945.50 107.2l3.0 -2.4v4.8z M959.90 107.2l-3.0 -2.4v4.8z M952.7 100.00l-2.4 3.0h4.8z M952.7 114.40l-2.4 -3.0h4.8z" fill="#66696c"/><path d="M585.6 142.4H980" stroke="#e4e5e6" stroke-width="1"/><path d="M625.3 166.70H963.7" stroke="#ebecec" stroke-width="1"/><text transform="translate(619.10,169.50) rotate(0.03) scale(0.96,1)" font-size="8.26" font-weight="400" fill="#6b6e71" text-anchor="end" >$180K</text><path d="M625.3 204.48H963.7" stroke="#ebecec" stroke-width="1"/><text transform="translate(619.10,207.28) rotate(0.03) scale(0.96,1)" font-size="8.26" font-weight="400" fill="#6b6e71" text-anchor="end" >$135K</text><path d="M625.3 242.25H963.7" stroke="#ebecec" stroke-width="1"/><text transform="translate(619.10,245.05) rotate(0.03) scale(0.96,1)" font-size="8.26" font-weight="400" fill="#6b6e71" text-anchor="end" >$90K</text><path d="M625.3 280.03H963.7" stroke="#ebecec" stroke-width="1"/><text transform="translate(619.10,282.83) rotate(0.03) scale(0.96,1)" font-size="8.26" font-weight="400" fill="#6b6e71" text-anchor="end" >$45K</text><path d="M625.3 317.80H963.7" stroke="#ebecec" stroke-width="1"/><text transform="translate(619.10,320.60) rotate(0.03) scale(0.96,1)" font-size="8.26" font-weight="400" fill="#6b6e71" text-anchor="end" >$0.0</text><rect x="627.90" y="213.10" width="22.6" height="16.00" fill="#00c6df"/><rect x="627.90" y="229.45" width="22.6" height="87.45" fill="#5fbf78"/><text x="626.65" y="209.30" font-size="8.99" font-weight="700" fill="#15181b" textLength="25.30" lengthAdjust="spacingAndGlyphs" transform="rotate(0.03 627.1 209.3)" stroke="#15181b" stroke-width="0.2">$124K</text><text transform="translate(639.20,333.00) rotate(0.03) scale(0.9,1)" font-size="8.41" font-weight="400" fill="#6b6e71" text-anchor="middle" >Ja…</text><rect x="656.17" y="185.30" width="22.6" height="16.10" fill="#00c6df"/><rect x="656.17" y="201.75" width="22.6" height="115.15" fill="#5fbf78"/><text x="654.92" y="181.50" font-size="8.99" font-weight="700" fill="#15181b" textLength="25.30" lengthAdjust="spacingAndGlyphs" transform="rotate(0.03 655.4 181.5)" stroke="#15181b" stroke-width="0.2">$157K</text><text transform="translate(667.47,333.00) rotate(0.03) scale(0.9,1)" font-size="8.41" font-weight="400" fill="#6b6e71" text-anchor="middle" >Fe…</text><rect x="684.44" y="185.30" width="22.6" height="16.10" fill="#00c6df"/><rect x="684.44" y="201.75" width="22.6" height="115.15" fill="#5fbf78"/><text x="683.19" y="181.50" font-size="8.99" font-weight="700" fill="#15181b" textLength="25.30" lengthAdjust="spacingAndGlyphs" transform="rotate(0.03 683.6 181.5)" stroke="#15181b" stroke-width="0.2">$157K</text><text transform="translate(695.74,333.00) rotate(0.03) scale(0.9,1)" font-size="8.41" font-weight="400" fill="#6b6e71" text-anchor="middle" >Ma…</text><rect x="712.71" y="185.30" width="22.6" height="16.10" fill="#00c6df"/><rect x="712.71" y="201.75" width="22.6" height="115.15" fill="#5fbf78"/><text x="711.46" y="181.50" font-size="8.99" font-weight="700" fill="#15181b" textLength="25.30" lengthAdjust="spacingAndGlyphs" transform="rotate(0.03 711.9 181.5)" stroke="#15181b" stroke-width="0.2">$157K</text><text transform="translate(724.01,333.00) rotate(0.03) scale(0.9,1)" font-size="8.41" font-weight="400" fill="#6b6e71" text-anchor="middle" >Ap…</text><rect x="740.98" y="185.30" width="22.6" height="16.10" fill="#00c6df"/><rect x="740.98" y="201.75" width="22.6" height="115.15" fill="#5fbf78"/><text x="739.73" y="181.50" font-size="8.99" font-weight="700" fill="#15181b" textLength="25.30" lengthAdjust="spacingAndGlyphs" transform="rotate(0.03 740.2 181.5)" stroke="#15181b" stroke-width="0.2">$157K</text><text transform="translate(752.28,333.00) rotate(0.03) scale(0.9,1)" font-size="8.41" font-weight="400" fill="#6b6e71" text-anchor="middle" >Ma…</text><rect x="769.25" y="185.30" width="22.6" height="16.10" fill="#00c6df"/><rect x="769.25" y="201.75" width="22.6" height="115.15" fill="#5fbf78"/><text x="768.00" y="181.50" font-size="8.99" font-weight="700" fill="#15181b" textLength="25.30" lengthAdjust="spacingAndGlyphs" transform="rotate(0.03 768.5 181.5)" stroke="#15181b" stroke-width="0.2">$157K</text><text transform="translate(780.55,333.00) rotate(0.03) scale(0.9,1)" font-size="8.41" font-weight="400" fill="#6b6e71" text-anchor="middle" >Ju…</text><rect x="797.52" y="185.30" width="22.6" height="16.10" fill="#00c6df"/><rect x="797.52" y="201.75" width="22.6" height="115.15" fill="#5fbf78"/><text x="796.27" y="181.50" font-size="8.99" font-weight="700" fill="#15181b" textLength="25.30" lengthAdjust="spacingAndGlyphs" transform="rotate(0.03 796.7 181.5)" stroke="#15181b" stroke-width="0.2">$157K</text><text transform="translate(808.82,333.00) rotate(0.03) scale(0.9,1)" font-size="8.41" font-weight="400" fill="#6b6e71" text-anchor="middle" >Ju…</text><rect x="825.79" y="185.30" width="22.6" height="16.10" fill="#00c6df"/><rect x="825.79" y="201.75" width="22.6" height="115.15" fill="#5fbf78"/><text x="824.54" y="181.50" font-size="8.99" font-weight="700" fill="#15181b" textLength="25.30" lengthAdjust="spacingAndGlyphs" transform="rotate(0.03 825.0 181.5)" stroke="#15181b" stroke-width="0.2">$157K</text><text transform="translate(837.09,333.00) rotate(0.03) scale(0.9,1)" font-size="8.41" font-weight="400" fill="#6b6e71" text-anchor="middle" >Au…</text><rect x="854.06" y="185.30" width="22.6" height="16.10" fill="#00c6df"/><rect x="854.06" y="201.75" width="22.6" height="115.15" fill="#5fbf78"/><text x="852.81" y="181.50" font-size="8.99" font-weight="700" fill="#15181b" textLength="25.30" lengthAdjust="spacingAndGlyphs" transform="rotate(0.03 853.3 181.5)" stroke="#15181b" stroke-width="0.2">$157K</text><text transform="translate(865.36,333.00) rotate(0.03) scale(0.9,1)" font-size="8.41" font-weight="400" fill="#6b6e71" text-anchor="middle" >Se…</text><rect x="882.33" y="170.50" width="22.6" height="30.90" fill="#00c6df"/><rect x="882.33" y="201.75" width="22.6" height="115.15" fill="#5fbf78"/><text x="881.08" y="166.70" font-size="8.99" font-weight="700" fill="#15181b" textLength="25.30" lengthAdjust="spacingAndGlyphs" transform="rotate(0.03 881.5 166.7)" stroke="#15181b" stroke-width="0.2">$174K</text><text transform="translate(893.63,333.00) rotate(0.03) scale(0.9,1)" font-size="8.41" font-weight="400" fill="#6b6e71" text-anchor="middle" >Oc…</text><rect x="910.60" y="169.50" width="22.6" height="31.90" fill="#00c6df"/><rect x="910.60" y="201.75" width="22.6" height="115.15" fill="#5fbf78"/><text x="909.35" y="165.70" font-size="8.99" font-weight="700" fill="#15181b" textLength="25.30" lengthAdjust="spacingAndGlyphs" transform="rotate(0.03 909.8 165.7)" stroke="#15181b" stroke-width="0.2">$175K</text><text transform="translate(921.90,333.00) rotate(0.03) scale(0.9,1)" font-size="8.41" font-weight="400" fill="#6b6e71" text-anchor="middle" >No…</text><rect x="938.87" y="169.50" width="22.6" height="31.90" fill="#00c6df"/><rect x="938.87" y="201.75" width="22.6" height="115.15" fill="#5fbf78"/><text x="937.62" y="165.70" font-size="8.99" font-weight="700" fill="#15181b" textLength="25.30" lengthAdjust="spacingAndGlyphs" transform="rotate(0.03 938.1 165.7)" stroke="#15181b" stroke-width="0.2">$175K</text><text transform="translate(950.17,333.00) rotate(0.03) scale(0.9,1)" font-size="8.41" font-weight="400" fill="#6b6e71" text-anchor="middle" >De…</text><path d="M585.6 346.6H980" stroke="#e4e5e6" stroke-width="1"/><circle cx="600.6" cy="361.2" r="3.7" fill="#00c6df"/><text x="607.34" y="364.40" font-size="9.28" font-weight="400" fill="#4a4d50" textLength="21.43" lengthAdjust="spacingAndGlyphs" transform="rotate(0.03 607.8 364.4)" >Open</text><circle cx="637.9" cy="361.2" r="3.7" fill="#5fbf78"/><text x="644.54" y="364.40" font-size="9.28" font-weight="400" fill="#4a4d50" textLength="18.13" lengthAdjust="spacingAndGlyphs" transform="rotate(0.03 645.0 364.4)" >Won</text><rect x="971.4" y="371.0" width="1" height="1" fill="#8a8d90"/><rect x="969.2" y="371.0" width="1" height="1" fill="#8a8d90"/><rect x="967.0" y="371.0" width="1" height="1" fill="#8a8d90"/><rect x="971.4" y="368.8" width="1" height="1" fill="#8a8d90"/><rect x="969.2" y="368.8" width="1" height="1" fill="#8a8d90"/><rect x="971.4" y="366.6" width="1" height="1" fill="#8a8d90"/></svg></section>
<section class="card" style="position:absolute;left:185px;top:378px;width:200px;height:214px;overflow:hidden"><svg width="200" height="214" viewBox="185 378 200 214" style="position:absolute;left:0;top:0;overflow:hidden;"><rect x="188.40" y="381.10" width="193.30" height="220.10" rx="2" fill="#000" fill-opacity="0.055"/><rect x="188.70" y="381.80" width="192.70" height="219.10" rx="1.3" fill="#000" fill-opacity="0.07"/><rect x="188.90" y="381.50" width="192.30" height="218.50" rx="1" fill="#fff"/><circle cx="209.55" cy="402.20" r="7.30" fill="#2b2e31"/><text x="209.55" y="406.41" font-size="12.56" font-weight="700" fill="#fff" text-anchor="middle" transform="rotate(0.03 209.6 402.2)">$</text><text x="222.66" y="406.70" font-size="12.75" font-weight="700" fill="#26292c" textLength="73.88" lengthAdjust="spacingAndGlyphs" transform="rotate(0.03 223.3 406.7)" >Deals started</text><text x="200.87" y="428.60" font-size="8.55" font-weight="700" fill="#64676a" textLength="35.86" lengthAdjust="spacingAndGlyphs" transform="rotate(0.03 201.3 428.6)" >THIS YEAR</text><path d="M188.9 440.3H381.2" stroke="#e4e5e6" stroke-width="1"/><path d="M274.2 451.6V587" stroke="#e9eaeb" stroke-width="1"/><path d="M298.6 451.6V587" stroke="#e9eaeb" stroke-width="1"/><path d="M322.5 451.6V587" stroke="#e9eaeb" stroke-width="1"/><rect x="274.2" y="455.90" width="33.4" height="25.7" fill="#56b4f9"/><text x="245.54" y="472.75" font-size="9.28" font-weight="400" fill="#6b6e71" textLength="22.73" lengthAdjust="spacingAndGlyphs" transform="rotate(0.03 246.0 472.8)" >Jenny</text><text x="311.23" y="472.65" font-size="9.42" font-weight="700" fill="#15181b" textLength="10.74" lengthAdjust="spacingAndGlyphs" transform="rotate(0.03 311.7 472.6)" >42</text><rect x="274.2" y="489.40" width="6.7" height="25.7" fill="#56b4f9"/><text x="232.14" y="506.25" font-size="9.28" font-weight="400" fill="#6b6e71" textLength="36.13" lengthAdjust="spacingAndGlyphs" transform="rotate(0.03 232.6 506.2)" >Breandan</text><text x="284.53" y="506.15" font-size="9.42" font-weight="700" fill="#15181b" textLength="5.34" lengthAdjust="spacingAndGlyphs" transform="rotate(0.03 285.0 506.1)" >9</text><rect x="274.2" y="522.90" width="4.9" height="25.7" fill="#56b4f9"/><text x="249.34" y="539.75" font-size="9.28" font-weight="400" fill="#6b6e71" textLength="18.93" lengthAdjust="spacingAndGlyphs" transform="rotate(0.03 249.8 539.8)" >Yssel</text><text x="282.73" y="539.65" font-size="9.42" font-weight="700" fill="#15181b" textLength="5.24" lengthAdjust="spacingAndGlyphs" transform="rotate(0.03 283.2 539.6)" >7</text><rect x="274.2" y="556.40" width="0.6" height="25.7" fill="#56b4f9"/><text x="219.84" y="573.25" font-size="9.28" font-weight="400" fill="#6b6e71" textLength="48.43" lengthAdjust="spacingAndGlyphs" transform="rotate(0.03 220.3 573.2)" >John Regular</text><text x="278.73" y="573.15" font-size="9.42" font-weight="700" fill="#15181b" textLength="4.34" lengthAdjust="spacingAndGlyphs" transform="rotate(0.03 279.2 573.1)" >1</text></svg></section>
<section class="card" style="position:absolute;left:383px;top:378px;width:200px;height:214px;overflow:hidden"><svg width="200" height="214" viewBox="383 378 200 214" style="position:absolute;left:0;top:0;overflow:hidden;"><rect x="386.40" y="381.10" width="193.70" height="220.10" rx="2" fill="#000" fill-opacity="0.055"/><rect x="386.70" y="381.80" width="193.10" height="219.10" rx="1.3" fill="#000" fill-opacity="0.07"/><rect x="386.90" y="381.50" width="192.70" height="218.50" rx="1" fill="#fff"/><circle cx="407.40" cy="402.20" r="7.30" fill="#2b2e31"/><text x="407.40" y="406.41" font-size="12.56" font-weight="700" fill="#fff" text-anchor="middle" transform="rotate(0.03 407.4 402.2)">$</text><text x="420.26" y="406.70" font-size="12.75" font-weight="700" fill="#26292c" textLength="142.08" lengthAdjust="spacingAndGlyphs" transform="rotate(0.03 420.9 406.7)" >Average value of won d…</text><text x="398.47" y="428.60" font-size="8.55" font-weight="700" fill="#64676a" textLength="36.26" lengthAdjust="spacingAndGlyphs" transform="rotate(0.03 398.9 428.6)" >THIS YEAR</text><circle cx="439.85" cy="425.90" r="0.75" fill="#5f6265"/><text x="445.57" y="428.60" font-size="8.55" font-weight="700" fill="#64676a" textLength="17.26" lengthAdjust="spacingAndGlyphs" transform="rotate(0.03 446.0 428.6)" >WON</text><path d="M386.9 440.3H579.6" stroke="#e4e5e6" stroke-width="1"/><text x="433.60" y="535.10" font-size="26.09" font-weight="700" fill="#26292c" textLength="99.21" lengthAdjust="spacingAndGlyphs" transform="rotate(0.03 434.9 535.1)" >$27,497</text><text x="439.89" y="559.00" font-size="10.29" font-weight="400" fill="#5f6265" textLength="85.73" lengthAdjust="spacingAndGlyphs" transform="rotate(0.03 440.4 559.0)" >Average deal value</text></svg></section>
<section class="card" style="position:absolute;left:582px;top:378px;width:199px;height:214px;overflow:hidden"><svg width="199" height="214" viewBox="582 378 199 214" style="position:absolute;left:0;top:0;overflow:hidden;"><rect x="585.10" y="381.10" width="192.60" height="220.10" rx="2" fill="#000" fill-opacity="0.055"/><rect x="585.40" y="381.80" width="192.00" height="219.10" rx="1.3" fill="#000" fill-opacity="0.07"/><rect x="585.60" y="381.50" width="191.60" height="218.50" rx="1" fill="#fff"/><path transform="translate(596.80,394.30) scale(0.7375)" fill="#2b2e31" d="M17 12h-5v5h5v-5zM16 1v2H8V1H6v2H5c-1.11 0-1.99.9-1.99 2L3 19c0 1.1.89 2 2 2h14c1.1 0 2-.9 2-2V5c0-1.1-.9-2-2-2h-1V1h-2zm3 18H5V8h14v11z"/><text x="618.66" y="406.70" font-size="12.75" font-weight="700" fill="#26292c" textLength="144.18" lengthAdjust="spacingAndGlyphs" transform="rotate(0.03 619.3 406.7)" >Activities completed an…</text><text x="597.27" y="428.60" font-size="8.55" font-weight="700" fill="#64676a" textLength="35.46" lengthAdjust="spacingAndGlyphs" transform="rotate(0.03 597.7 428.6)" >THIS YEAR</text><path d="M585.6 440.3H777.2" stroke="#e4e5e6" stroke-width="1"/><path d="M625.3 464.40H766" stroke="#ebecec" stroke-width="1"/><text transform="translate(618.60,467.30) rotate(0.03) scale(0.88,1)" font-size="8.41" font-weight="400" fill="#6b6e71" text-anchor="end" >60</text><path d="M625.3 489.75H766" stroke="#ebecec" stroke-width="1"/><text transform="translate(618.60,492.65) rotate(0.03) scale(0.88,1)" font-size="8.41" font-weight="400" fill="#6b6e71" text-anchor="end" >45</text><path d="M625.3 515.10H766" stroke="#ebecec" stroke-width="1"/><text transform="translate(618.60,518.00) rotate(0.03) scale(0.88,1)" font-size="8.41" font-weight="400" fill="#6b6e71" text-anchor="end" >30</text><path d="M625.3 540.45H766" stroke="#ebecec" stroke-width="1"/><text transform="translate(618.60,543.35) rotate(0.03) scale(0.88,1)" font-size="8.41" font-weight="400" fill="#6b6e71" text-anchor="end" >15</text><path d="M625.3 565.80H766" stroke="#ebecec" stroke-width="1"/><text transform="translate(618.60,568.70) rotate(0.03) scale(0.88,1)" font-size="8.41" font-weight="400" fill="#6b6e71" text-anchor="end" >0</text><rect x="632" y="490.6" width="56" height="51.1" fill="#56b4f9"/><rect x="632" y="541.7" width="56" height="11.8" fill="#fca82b"/><rect x="632" y="553.5" width="56" height="11.5" fill="#bf69c8"/><rect x="702.3" y="520.9" width="56.3" height="30.8" fill="#56b4f9"/><rect x="702.3" y="551.7" width="56.3" height="1.8" fill="#fca82b"/><rect x="702.3" y="553.5" width="56.3" height="9.7" fill="#bf69c8"/><rect x="702.3" y="563.2" width="56.3" height="1.8" fill="#7e93ab"/><text transform="translate(660.00,487.00) rotate(0.03) scale(0.92,1)" font-size="9.13" font-weight="700" fill="#15181b" text-anchor="middle" >44</text><text transform="translate(730.50,517.10) rotate(0.03) scale(0.92,1)" font-size="9.13" font-weight="700" fill="#15181b" text-anchor="middle" >26</text><text transform="translate(660.00,581.20) rotate(0.03) scale(0.9,1)" font-size="8.99" font-weight="400" fill="#6b6e71" text-anchor="middle" >To do</text><text transform="translate(730.50,581.20) rotate(0.03) scale(0.9,1)" font-size="8.99" font-weight="400" fill="#6b6e71" text-anchor="middle" >Done</text></svg></section>
<section class="card" style="position:absolute;left:780px;top:378px;width:193px;height:214px;overflow:hidden"><svg width="193" height="214" viewBox="780 378 193 214" style="position:absolute;left:0;top:0;overflow:hidden;"><rect x="782.50" y="381.10" width="198.00" height="220.10" rx="2" fill="#000" fill-opacity="0.055"/><rect x="782.80" y="381.80" width="197.40" height="219.10" rx="1.3" fill="#000" fill-opacity="0.07"/><rect x="783.00" y="381.50" width="197.00" height="218.50" rx="1" fill="#fff"/><circle cx="803.70" cy="402.10" r="7.30" fill="#2b2e31"/><text x="803.70" y="406.31" font-size="12.56" font-weight="700" fill="#fff" text-anchor="middle" transform="rotate(0.03 803.7 402.1)">$</text><text x="816.46" y="406.70" font-size="12.75" font-weight="700" fill="#26292c" textLength="117.88" lengthAdjust="spacingAndGlyphs" transform="rotate(0.03 817.1 406.7)" >Deals lost by reasons</text><text x="794.87" y="428.60" font-size="8.55" font-weight="700" fill="#64676a" textLength="17.26" lengthAdjust="spacingAndGlyphs" transform="rotate(0.03 795.3 428.6)" >LOST</text><circle cx="818.05" cy="425.90" r="0.75" fill="#5f6265"/><text x="824.57" y="428.60" font-size="8.55" font-weight="700" fill="#64676a" textLength="36.16" lengthAdjust="spacingAndGlyphs" transform="rotate(0.03 825.0 428.6)" >LAST YEAR</text><path d="M783.0 440.3H980" stroke="#e4e5e6" stroke-width="1"/><path d="M879.3 517.4L923.30 517.40A44.0 44.0 0 0 0 837.08 505.00z" fill="#56b4f9" stroke="#fff" stroke-width="0.8" stroke-linejoin="round"/><path d="M879.3 517.4L837.08 505.00A44.0 44.0 0 0 0 897.58 557.42z" fill="#fca82b" stroke="#fff" stroke-width="0.8" stroke-linejoin="round"/><path d="M879.3 517.4L897.58 557.42A44.0 44.0 0 0 0 923.30 517.40z" fill="#bf69c8" stroke="#fff" stroke-width="0.8" stroke-linejoin="round"/><path d="M885.7 473.6V463.6H891" fill="none" stroke="#c9cbcd" stroke-width="0.8"/><path d="M916.5 541.4L919 546.5H925" fill="none" stroke="#c9cbcd" stroke-width="0.8"/><path d="M850.3 551.7L847.7 558.6H843" fill="none" stroke="#c9cbcd" stroke-width="0.8"/><text x="892.95" y="463.60" font-size="8.99" font-weight="700" fill="#15181b" textLength="5.30" lengthAdjust="spacingAndGlyphs" transform="rotate(0.03 893.4 463.6)" >5</text><text x="926.35" y="547.60" font-size="8.99" font-weight="700" fill="#15181b" textLength="5.50" lengthAdjust="spacingAndGlyphs" transform="rotate(0.03 926.8 547.6)" >2</text><text x="835.65" y="559.10" font-size="8.99" font-weight="700" fill="#15181b" textLength="5.60" lengthAdjust="spacingAndGlyphs" transform="rotate(0.03 836.1 559.1)" >4</text></svg></section></div></body></html>
